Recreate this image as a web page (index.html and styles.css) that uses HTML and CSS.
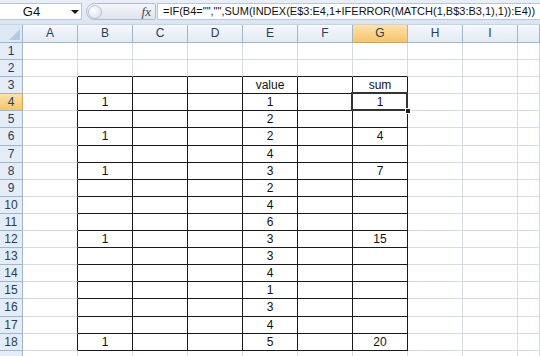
FILE: index.html
```html
<!DOCTYPE html>
<html>
<head>
<meta charset="utf-8">
<link rel="stylesheet" href="styles.css">
</head>
<body>
<div class="fbar">
  <div class="namebox"><span class="name">G4</span><span class="arrow"></span></div>
  <div class="fxbtn"><span class="knob"></span><span class="fx">fx</span></div>
  <div class="formula">=IF(B4="","",SUM(INDEX(E$3:E4,1+IFERROR(MATCH(1,B$3:B3,1),1)):E4))</div>
</div>
<div class="sheet">
  <div class="r hdr"><div class="corner"></div><div class="ch">A</div><div class="ch">B</div><div class="ch">C</div><div class="ch">D</div><div class="ch">E</div><div class="ch">F</div><div class="ch sel">G</div><div class="ch">H</div><div class="ch">I</div><div class="ch"></div></div>
  <div class="r"><div class="rh">1</div><div class="c"></div><div class="c"></div><div class="c"></div><div class="c"></div><div class="c"></div><div class="c"></div><div class="c"></div><div class="c"></div><div class="c"></div><div class="c"></div></div>
  <div class="r"><div class="rh">2</div><div class="c"></div><div class="c t"></div><div class="c t"></div><div class="c t"></div><div class="c t"></div><div class="c t"></div><div class="c t"></div><div class="c"></div><div class="c"></div><div class="c"></div></div>
  <div class="r"><div class="rh">3</div><div class="c l"></div><div class="c x"></div><div class="c x"></div><div class="c x"></div><div class="c x">value</div><div class="c x"></div><div class="c x">sum</div><div class="c"></div><div class="c"></div><div class="c"></div></div>
  <div class="r"><div class="rh sel">4</div><div class="c l"></div><div class="c x">1</div><div class="c x"></div><div class="c x"></div><div class="c x">1</div><div class="c x"></div><div class="c x active">1</div><div class="c"></div><div class="c"></div><div class="c"></div></div>
  <div class="r"><div class="rh">5</div><div class="c l"></div><div class="c x"></div><div class="c x"></div><div class="c x"></div><div class="c x">2</div><div class="c x"></div><div class="c x"></div><div class="c"></div><div class="c"></div><div class="c"></div></div>
  <div class="r"><div class="rh">6</div><div class="c l"></div><div class="c x">1</div><div class="c x"></div><div class="c x"></div><div class="c x">2</div><div class="c x"></div><div class="c x">4</div><div class="c"></div><div class="c"></div><div class="c"></div></div>
  <div class="r"><div class="rh">7</div><div class="c l"></div><div class="c x"></div><div class="c x"></div><div class="c x"></div><div class="c x">4</div><div class="c x"></div><div class="c x"></div><div class="c"></div><div class="c"></div><div class="c"></div></div>
  <div class="r"><div class="rh">8</div><div class="c l"></div><div class="c x">1</div><div class="c x"></div><div class="c x"></div><div class="c x">3</div><div class="c x"></div><div class="c x">7</div><div class="c"></div><div class="c"></div><div class="c"></div></div>
  <div class="r"><div class="rh">9</div><div class="c l"></div><div class="c x"></div><div class="c x"></div><div class="c x"></div><div class="c x">2</div><div class="c x"></div><div class="c x"></div><div class="c"></div><div class="c"></div><div class="c"></div></div>
  <div class="r"><div class="rh">10</div><div class="c l"></div><div class="c x"></div><div class="c x"></div><div class="c x"></div><div class="c x">4</div><div class="c x"></div><div class="c x"></div><div class="c"></div><div class="c"></div><div class="c"></div></div>
  <div class="r"><div class="rh">11</div><div class="c l"></div><div class="c x"></div><div class="c x"></div><div class="c x"></div><div class="c x">6</div><div class="c x"></div><div class="c x"></div><div class="c"></div><div class="c"></div><div class="c"></div></div>
  <div class="r"><div class="rh">12</div><div class="c l"></div><div class="c x">1</div><div class="c x"></div><div class="c x"></div><div class="c x">3</div><div class="c x"></div><div class="c x">15</div><div class="c"></div><div class="c"></div><div class="c"></div></div>
  <div class="r"><div class="rh">13</div><div class="c l"></div><div class="c x"></div><div class="c x"></div><div class="c x"></div><div class="c x">3</div><div class="c x"></div><div class="c x"></div><div class="c"></div><div class="c"></div><div class="c"></div></div>
  <div class="r"><div class="rh">14</div><div class="c l"></div><div class="c x"></div><div class="c x"></div><div class="c x"></div><div class="c x">4</div><div class="c x"></div><div class="c x"></div><div class="c"></div><div class="c"></div><div class="c"></div></div>
  <div class="r"><div class="rh">15</div><div class="c l"></div><div class="c x"></div><div class="c x"></div><div class="c x"></div><div class="c x">1</div><div class="c x"></div><div class="c x"></div><div class="c"></div><div class="c"></div><div class="c"></div></div>
  <div class="r"><div class="rh">16</div><div class="c l"></div><div class="c x"></div><div class="c x"></div><div class="c x"></div><div class="c x">3</div><div class="c x"></div><div class="c x"></div><div class="c"></div><div class="c"></div><div class="c"></div></div>
  <div class="r"><div class="rh">17</div><div class="c l"></div><div class="c x"></div><div class="c x"></div><div class="c x"></div><div class="c x">4</div><div class="c x"></div><div class="c x"></div><div class="c"></div><div class="c"></div><div class="c"></div></div>
  <div class="r"><div class="rh">18</div><div class="c l"></div><div class="c x">1</div><div class="c x"></div><div class="c x"></div><div class="c x">5</div><div class="c x"></div><div class="c x">20</div><div class="c"></div><div class="c"></div><div class="c"></div></div>
  <div class="r"><div class="rh"></div><div class="c"></div><div class="c"></div><div class="c"></div><div class="c"></div><div class="c"></div><div class="c"></div><div class="c"></div><div class="c"></div><div class="c"></div><div class="c"></div></div>
</div>
</body>
</html>
```
FILE: styles.css
```css
html, body {
  margin: 0;
  padding: 0;
  width: 540px;
  height: 356px;
  overflow: hidden;
  background: #ffffff;
  font-family: "Liberation Sans", Arial, sans-serif;
}

.fbar {
  height: 25px;
  box-sizing: border-box;
  padding: 3px 0 4px 0;
  display: flex;
  background: linear-gradient(#e9eff8, #dbe5f2);
  border-bottom: 1px solid #c5d3e6;
}

.namebox {
  width: 82px;
  flex-shrink: 0;
  box-sizing: border-box;
  background: #fff;
  border: 1px solid #b8c6d8;
  border-left: none;
  display: flex;
  align-items: center;
  position: relative;
}

.name {
  flex: 1;
  text-align: center;
  font-size: 13px;
  color: #111;
  padding-right: 8px;
}

.arrow {
  width: 0;
  height: 0;
  border-left: 4px solid transparent;
  border-right: 4px solid transparent;
  border-top: 4px solid #111;
  margin-right: 2px;
}

.fxbtn {
  width: 70px;
  flex-shrink: 0;
  margin-left: 4px;
  box-sizing: border-box;
  border: 1px solid #aebbcd;
  border-radius: 9px 2px 2px 9px;
  background: linear-gradient(#f4f6f9, #dfe4ec);
  display: flex;
  align-items: center;
  justify-content: space-between;
  padding: 0 4px 0 1px;
}

.knob {
  width: 14px;
  height: 14px;
  border-radius: 50%;
  box-sizing: border-box;
  border: 1px solid #b9c2cf;
  background: radial-gradient(circle at 35% 35%, #ffffff, #d5dbe4);
}

.fx {
  font-family: "Liberation Serif", serif;
  font-style: italic;
  font-size: 13px;
  color: #445;
}

.formula {
  flex: 1;
  min-width: 0;
  overflow: hidden;
  margin-left: 1px;
  background: #fff;
  border: 1px solid #b8c6d8;
  border-right: none;
  font-size: 11px;
  letter-spacing: 0;
  line-height: 15px;
  padding-left: 5px;
  color: #111;
  white-space: nowrap;
}

.sheet {
  display: flex;
  flex-direction: column;
}

.r {
  display: grid;
  grid-template-columns: 23px repeat(9, 55px) 1fr;
  height: 17.1px;
}

.r.hdr {
  height: 18px;
}

.corner {
  box-sizing: border-box;
  border-right: 1px solid #9eb6ce;
  border-bottom: 1px solid #9eb6ce;
  background: #dde8f5;
  position: relative;
}

.corner::after {
  content: "";
  position: absolute;
  right: 2px;
  bottom: 2px;
  width: 0;
  height: 0;
  border-left: 11px solid transparent;
  border-bottom: 11px solid #b7c9e0;
}

.ch {
  box-sizing: border-box;
  border-right: 1px solid #9eb6ce;
  border-bottom: 1px solid #9eb6ce;
  background: linear-gradient(#f5f8fc, #e3eaf4);
  font-size: 12px;
  line-height: 17px;
  text-align: center;
  color: #2a3d55;
}

.ch.sel {
  background: linear-gradient(#fbe2ad, #f6c56a);
  border-bottom-color: #e0a23a;
}

.rh {
  box-sizing: border-box;
  border-right: 1px solid #9eb6ce;
  border-bottom: 1px solid #9eb6ce;
  background: #e4ecf7;
  font-size: 12px;
  line-height: 16px;
  text-align: center;
  color: #2a3d55;
}

.rh.sel {
  background: linear-gradient(#fbe2ad, #f6c56a);
  border-right-color: #e0a23a;
}

.c {
  box-sizing: border-box;
  border-right: 1px solid #d4dbe6;
  border-bottom: 1px solid #d4dbe6;
  font-size: 12px;
  line-height: 16px;
  text-align: center;
  color: #111;
}

.c.t {
  border-bottom-color: #1a1a1a;
}

.c.l {
  border-right-color: #1a1a1a;
}

.c.x {
  border-right-color: #1a1a1a;
  border-bottom-color: #1a1a1a;
}

.c.active {
  position: relative;
}

.c.active::before {
  content: "";
  position: absolute;
  left: -2px;
  top: -2px;
  right: -1px;
  bottom: -1px;
  border: 2px solid #333;
}

.c.active::after {
  content: "";
  position: absolute;
  right: -4px;
  bottom: -4px;
  width: 4px;
  height: 4px;
  background: #222;
  border: 1px solid #fff;
}
```
